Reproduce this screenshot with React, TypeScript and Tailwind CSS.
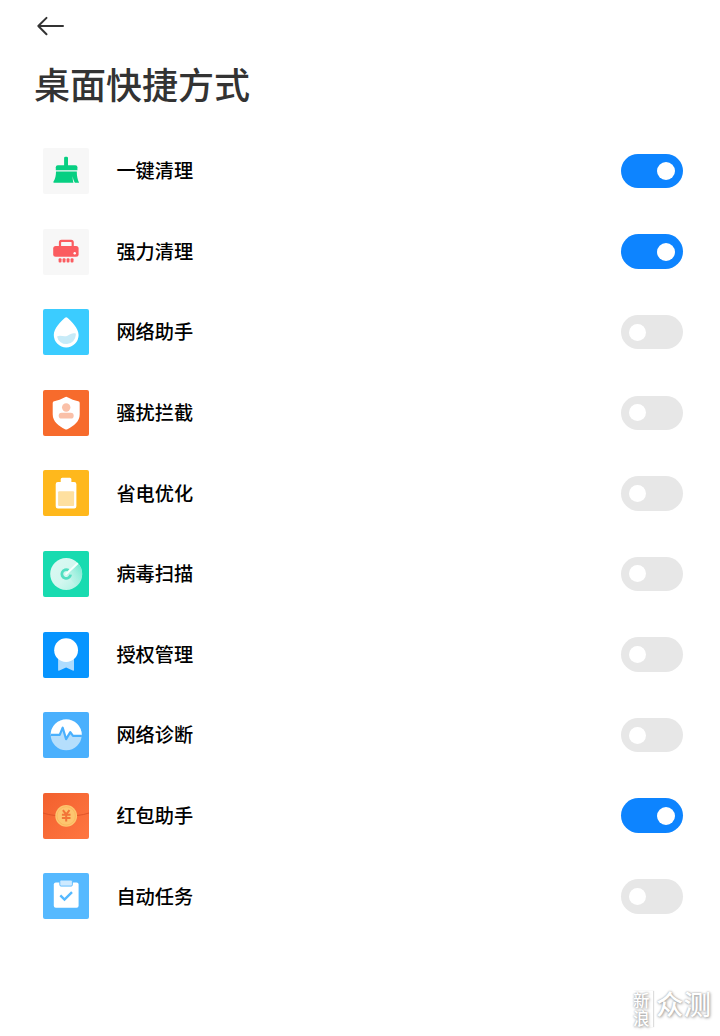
import { useState } from 'react'
import type { ReactNode } from 'react'

type Shortcut = {
  label: string
  tile: string
  enabled: boolean
  icon: ReactNode
}

const shortcuts: Shortcut[] = [
  {
    label: '一键清理',
    tile: 'bg-[#f7f7f7]',
    enabled: true,
    icon: (
      <g fill="#07cf82">
        <rect x="21.1" y="8.7" width="3.9" height="11" rx="1.4" />
        <path d="M12.8 22.2v-3a2 2 0 0 1 2-2h17.6a2 2 0 0 1 2 2v3z" />
        <path d="M13 23.5h20.8c0 4.6.7 8 2.3 11.2h-4.2c-1.2-1.8-1.9-3.8-2.2-6.4-.1 2.4.1 4.4.8 6.4H10.9c-.6 0-.8-.4-.5-.9 1.9-3 2.6-6.3 2.6-10.3z" />
      </g>
    ),
  },
  {
    label: '强力清理',
    tile: 'bg-[#f7f7f7]',
    enabled: true,
    icon: (
      <g fill="#fb5c60">
        <path d="M17 18v-4.6a1.5 1.5 0 0 1 1.5-1.5h9.7a1.5 1.5 0 0 1 1.5 1.5V18" fill="none" stroke="#fb5c60" strokeWidth="2.2" />
        <rect x="10.2" y="16.9" width="25.4" height="10.8" rx="2.5" />
        <circle cx="31.7" cy="24.3" r="1.2" fill="#fff" />
        <rect x="15.6" y="29.3" width="2.9" height="4.2" rx="1" />
        <rect x="19.6" y="29.3" width="2.9" height="4.2" rx="1" />
        <rect x="23.6" y="29.3" width="2.9" height="4.2" rx="1" />
        <rect x="27.6" y="29.3" width="2.9" height="4.2" rx="1" />
      </g>
    ),
  },
  {
    label: '网络助手',
    tile: 'bg-[#3bccff]',
    enabled: false,
    icon: (
      <>
        <path d="M22 8.8q1.2-.9 2.4 0C28.4 12.4 35.6 19.5 35.6 26a12.4 12.4 0 0 1-24.8 0c0-6.5 7.2-13.6 11.2-17.2z" fill="#fff" />
        <path d="M14 27.5c4-1.8 6.5 1 10.5-.7 3-2 5-3 8.300-2.300v1.500A9.500 9.500 0 0 1 14 27.500z" fill="#c8ebf8" />
      </>
    ),
  },
  {
    label: '骚扰拦截',
    tile: 'bg-[#f76b2c]',
    enabled: false,
    icon: (
      <>
        <path d="M21.9 7.2q1.3-.7 2.6 0c3.5 2 7 3.3 10.7 4q1.5.3 1.5 1.8v11.2c0 7.5-6 11.8-12.3 15q-1.2.6-2.4 0c-6.3-3.2-12.3-7.5-12.3-15V13q0-1.5 1.5-1.8c3.7-.7 7.2-2 10.7-4z" fill="#fff" />
        <circle cx="23.2" cy="17.5" r="4.2" fill="#fac0a8" />
        <rect x="15.7" y="22.8" width="15" height="5.8" rx="2.9" fill="#fac0a8" />
      </>
    ),
  },
  {
    label: '省电优化',
    tile: 'bg-[#ffb81c]',
    enabled: false,
    icon: (
      <>
        <path d="M17.7 12V9.3q0-1.5 1.5-1.5h7.7q1.5 0 1.5 1.5V12h2.8q2.2 0 2.2 2.2v22q0 2.2-2.2 2.2H14.9q-2.2 0-2.2-2.2v-22q0-2.2 2.2-2.2z" fill="#fff" />
        <rect x="15.1" y="21.3" width="16" height="14.6" rx="1" fill="#fee0a0" />
      </>
    ),
  },
  {
    label: '病毒扫描',
    tile: 'bg-[#18dbb0]',
    enabled: false,
    icon: (
      <>
        <defs>
          <linearGradient id="radar" x1="0" y1="0" x2="1" y2="1">
            <stop offset="0" stopColor="#dcf9f3" />
            <stop offset=".55" stopColor="#d2f7ef" />
            <stop offset="1" stopColor="#a8f0e0" />
          </linearGradient>
          <linearGradient id="sweep" x1="1" y1="0" x2=".3" y2="1">
            <stop offset="0" stopColor="#5ce6c9" />
            <stop offset="1" stopColor="#a0efde" stopOpacity="0" />
          </linearGradient>
        </defs>
        <circle cx="23.2" cy="23" r="16" fill="url(#radar)" />
        <path d="M23.2 23 34.9 12.2A16 16 0 0 1 33.4 35.3z" fill="url(#sweep)" />
        <path d="M25.6 19.3a4.4 4.4 0 1 0 2 4.3" fill="none" stroke="#52dfc1" strokeWidth="2.8" />
        <path d="m23.2 23 11-10.3" stroke="#f5fffc" strokeWidth="2" strokeLinecap="round" />
      </>
    ),
  },
  {
    label: '授权管理',
    tile: 'bg-[#0795ff]',
    enabled: false,
    icon: (
      <>
        <path d="M15.1 25H31v12.7q0 1.4-1.3.7l-6.6-3-6.7 3q-1.3.7-1.3-.7z" fill="#aedcff" />
        <circle cx="23.1" cy="18.2" r="11.9" fill="#fff" />
      </>
    ),
  },
  {
    label: '网络诊断',
    tile: 'bg-[#4ab0fd]',
    enabled: false,
    icon: (
      <>
        <circle cx="23.2" cy="22.7" r="15.5" fill="#b5defc" />
        <path d="M7.7 22.9a15.5 15.5 0 0 1 31 0h-8.5l-3-3-4 7-3.5-11-3 7z" fill="#fff" />
        <path d="M7.7 22.9h9l3-7.2 3.4 11.4 4.2-7 2.7 3.7h8.8" fill="none" stroke="#4ab0fd" strokeWidth="2.2" strokeLinejoin="round" />
      </>
    ),
  },
  {
    label: '红包助手',
    tile: 'bg-linear-to-br from-[#f2602e] to-[#ff7640]',
    enabled: true,
    icon: (
      <>
        <path d="M0 20c7 2.4 15 3 23 3s16-.6 23-3" fill="none" stroke="#d94e24" strokeWidth=".8" />
        <circle cx="23.2" cy="22.9" r="10.9" fill="#fdc56f" />
        <circle cx="23.2" cy="22.9" r="9.2" fill="none" stroke="#f7b052" strokeWidth=".6" />
        <path d="m19.9 17.2 3.3 4.2 3.3-4.2M18.9 21.7h8.6M18.9 24.9h8.6M23.2 21v7.5" fill="none" stroke="#f27438" strokeWidth="2" />
      </>
    ),
  },
  {
    label: '自动任务',
    tile: 'bg-[#56b9ff]',
    enabled: false,
    icon: (
      <>
        <rect x="10.8" y="9.5" width="24.8" height="25.3" rx="2" fill="#fff" />
        <rect x="16.8" y="7.1" width="12.6" height="6" rx="1.3" fill="#ceeaff" stroke="#56b9ff" strokeWidth=".9" />
        <path d="m17.3 22.4 4.2 4.2 7.5-7.5" fill="none" stroke="#56b9ff" strokeWidth="2.4" />
      </>
    ),
  },
]

function Toggle({ on, label, onChange }: { on: boolean; label: string; onChange: () => void }) {
  return (
    <button
      role="switch"
      aria-checked={on}
      aria-label={label}
      onClick={onChange}
      className={`flex h-[34.5px] w-[62.5px] items-center rounded-full ${
        on ? 'justify-end bg-[#0d84ff] pr-2' : 'justify-start bg-[#e7e7e7] pl-2'
      }`}
    >
      <span className={`rounded-full bg-white ${on ? 'size-[18px]' : 'size-[17px]'}`} />
    </button>
  )
}

function ShortcutRow({ item }: { item: Shortcut }) {
  const [on, setOn] = useState(item.enabled)

  return (
    <li className="flex h-[80.6px] items-center">
      <div className={`size-[46px] shrink-0 overflow-hidden rounded-[2px] ${item.tile}`}>
        <svg viewBox="0 0 46 46" className="size-full">{item.icon}</svg>
      </div>
      <span className="ml-[27px] flex-1 pb-[1.5px] text-[19.2px] leading-7 font-medium text-black">{item.label}</span>
      <Toggle on={on} label={item.label} onChange={() => setOn(!on)} />
    </li>
  )
}

export default function App() {
  return (
    <div className="relative h-[1036px] w-[720px] overflow-hidden bg-white font-['Noto_Sans_CJK_SC',sans-serif]">
      <header className="pt-[15px] pl-[34px]">
        <button aria-label="返回" className="block h-[22px] w-8">
          <svg viewBox="0 0 32 22" className="h-[22px] w-8" fill="none" stroke="#333" strokeWidth="2" strokeLinecap="round" strokeLinejoin="round">
            <path d="M29 11H4.3M12.5 2.9 4.3 11l8.2 8.2" />
          </svg>
        </button>
        <h1 className="mt-[19px] text-[36px] leading-[54px] font-medium text-[#333]">桌面快捷方式</h1>
      </header>

      <ul className="mt-[20.7px] pr-[36.8px] pl-[43.4px]">
        {shortcuts.map((item) => (
          <ShortcutRow key={item.label} item={item} />
        ))}
      </ul>

      {/* Watermark floating over the page corner */}
      <div className="absolute right-[9px] bottom-[9px] flex items-start gap-[3px] text-white [text-shadow:0_0_2px_#999,1px_1px_3px_#aaa]">
        <div className="w-[20px] border-r border-white text-[16.5px] leading-[18px] font-medium break-all shadow-[1px_0_1px_#ddd]">
          新浪
        </div>
        <span className="-mt-[3px] text-[27.5px] leading-[30px] font-medium">众测</span>
      </div>
    </div>
  )
}
